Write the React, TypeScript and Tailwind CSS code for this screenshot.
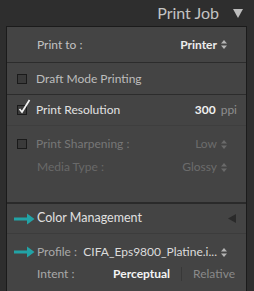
import React from "react";

const UpDown = ({ dim = false }: { dim?: boolean }) => (
  <svg width="6" height="9" viewBox="0 0 6 9" className="ml-[4px]">
    <path d="M0 3.5 L3 0 L6 3.5 Z" fill={dim ? "#6a6a6a" : "#b5b5b5"} />
    <path d="M0 5.5 L3 9 L6 5.5 Z" fill={dim ? "#6a6a6a" : "#b5b5b5"} />
  </svg>
);

const TealArrow = () => (
  <svg width="21" height="12" viewBox="0 0 21 12" className="absolute left-[7px]">
    <path d="M0 4.5 H13 V0.5 L20.5 6 L13 11.5 V7.5 H0 Z" fill="#22a3a6" />
  </svg>
);

const Box = ({ checked = false }: { checked?: boolean }) => (
  <div className="relative w-[10px] h-[10px] shrink-0 border border-[#1a1a1a] bg-[#3a3a3a]">
    {checked && (
      <svg width="13" height="15" viewBox="0 0 13 15" className="absolute left-[0px] top-[-7px]">
        <path d="M1.5 10 L4 13 L11.5 1" stroke="#f2f2f2" strokeWidth="1.7" fill="none" />
      </svg>
    )}
  </div>
);

export default function App() {
  return (
    <div
      className="w-[254px] h-[291px] bg-[#2e2e2e] flex flex-col overflow-hidden text-[12px]"
      style={{ fontFamily: "Lato, 'Open Sans', sans-serif" }}
    >
      <div className="h-[26px] flex items-center justify-end pr-[11px]">
        <span className="text-[16px] text-[#c3c3c3] mr-[14px]">Print Job</span>
        <svg width="10" height="9" viewBox="0 0 10 9">
          <path d="M0 0 H10 L5 9 Z" fill="#bdbdbd" />
        </svg>
      </div>

      <div className="flex-1 ml-[6px] mr-[7px] border-l border-r border-t border-[#1b1b1b] bg-[#444444] flex flex-col">
        <div className="h-[36px] flex items-center justify-between pl-[30px] pr-[19px] border-b border-[#2c2c2c]">
          <span className="text-[#c2c2c2]">Print to :</span>
          <span className="flex items-center text-[#ececec] font-bold">
            Printer
            <UpDown />
          </span>
        </div>

        <div className="h-[32px] flex items-center pl-[10px] gap-[9px] border-b border-[#2c2c2c]">
          <Box />
          <span className="text-[#bdbdbd]">Draft Mode Printing</span>
        </div>

        <div className="h-[31px] flex items-center pl-[10px] pr-[9px] border-b border-[#3e3e3e]">
          <Box checked />
          <span className="text-[#e2e2e2] ml-[9px]">Print Resolution</span>
          <span className="ml-auto text-[#f0f0f0] font-bold">300</span>
          <span className="ml-[5px] text-[#8e8e8e]">ppi</span>
        </div>

        <div className="flex flex-col h-[78px] pt-[8px] border-b-2 border-[#2a2a2a]">
          <div className="h-[20px] flex items-center pl-[10px] pr-[19px]">
            <Box />
            <span className="text-[#777777] ml-[9px]">Print Sharpening :</span>
            <span className="ml-auto flex items-center text-[#6c6c6c]">
              Low
              <UpDown dim />
            </span>
          </div>
          <div className="h-[26px] flex items-center pl-[30px] pr-[19px] justify-between">
            <span className="text-[#696969]">Media Type :</span>
            <span className="flex items-center text-[#6c6c6c]">
              Glossy
              <UpDown dim />
            </span>
          </div>
        </div>

        <div className="relative h-[30px] flex items-center pl-[30px] pr-[10px] border-b border-[#3c3c3c]">
          <TealArrow />
          <span className="text-[#e0e0e0] text-[12.5px]">Color Management</span>
          <svg width="8" height="9" viewBox="0 0 8 9" className="ml-auto">
            <path d="M8 0 V9 L0 4.5 Z" fill="#2a2a2a" />
          </svg>
        </div>

        <div className="relative h-[22px] mt-[7px] flex items-center pl-[30px] pr-[19px]">
          <TealArrow />
          <span className="text-[#a9a9a9] w-[53px]">Profile :</span>
          <span className="flex items-center text-[#dcdcdc]">
            CIFA_Eps9800_Platine.i...
            <UpDown />
          </span>
        </div>

        <div className="h-[20px] mt-[1px] flex items-center pl-[30px] pr-[11px]">
          <span className="text-[#a9a9a9] w-[77px]">Intent :</span>
          <span className="text-[#f4f4f4] font-bold">Perceptual</span>
          <div className="w-px h-[14px] bg-[#383838] ml-[11px] mr-[11px]" />
          <span className="text-[#8a8a8a]">Relative</span>
        </div>
      </div>
    </div>
  );
}
